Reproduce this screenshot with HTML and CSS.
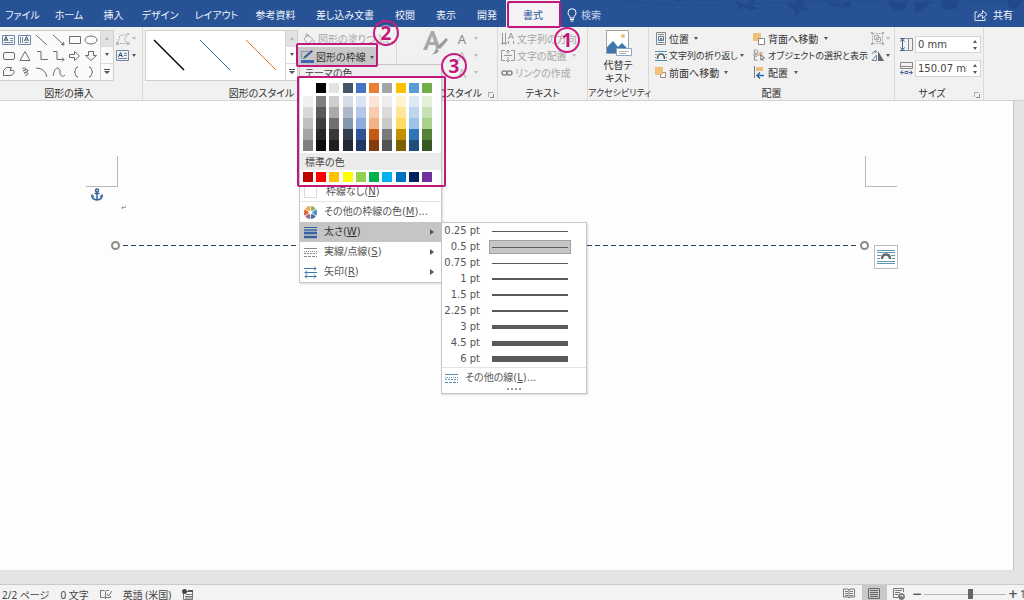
FILE: index.html
```html
<!DOCTYPE html>
<html lang="ja">
<head>
<meta charset="utf-8">
<title>文書 - 書式</title>
<link rel="stylesheet" href="styles.css">
</head>
<body>
<div class="app">
  <header class="titlebar">
    <svg class="leaves" width="404" height="28" viewBox="0 0 404 28" aria-hidden="true">
      <path d="M54 0q2 3 8 0M112 0l14 5 6-5h3l-3 6 8 2-8 2-8-3-9 3 5-5zM166 4l12-4h8l-4 6 8 4-10 1-4 6-2-7zM206 0q14 8 24 0l2 6q-10 4-14 0-8 2-12-6M268 0q10 4 20 0 0 8-8 12-10-2-12-12M296 2q10 0 14-2-2 10-16 12zM322 0h16q2 8-8 10-10 0-8-10zM288 12q8 2 18-4-4 6-18 4M386 0h16q-2 8-10 10-4-4-6-10"/>
      <path class="twig" d="M0 0q60 8 130 4t130-2 144-2M210 0q10 6 24 9M334 2q4 8 2 12"/>
    </svg>
    <nav class="tabs">
      <button>ファイル</button><button>ホーム</button><button>挿入</button><button>デザイン</button><button>レイアウト</button><button>参考資料</button><button>差し込み文書</button><button>校閲</button><button>表示</button><button>開発</button><button class="active">書式</button>
    </nav>
    <button class="tell"><svg width="10" height="14" viewBox="0 0 10 14"><path d="M3 10V8.500Q1 7 1 4.700a4 4 0 0 1 8 0Q9 7 7 8.500V10zM3 11.500h4M3.500 13h3" fill="none" stroke="#fff"/></svg>検索</button>
    <button class="share"><svg width="14" height="12" viewBox="0 0 14 12"><path d="M3.500 3H1v8.500h10V9M3.500 8.500Q4 4.500 8.500 4.500V1.500l4.500 4-4.500 4v-3Q5 6.500 3.500 8.500z" fill="none" stroke="#dfe8f7"/></svg>共有</button>
  </header>

  <div class="ribbon">
    <section class="group g-insert">
      <div class="body">
        <div class="gallery">
          <svg class="shapes" width="100" height="49" viewBox="0 0 100 49" fill="none" stroke="#6b6b6b">
            <g stroke="#6f86a5"><path d="M2.500 4.500h12v9h-12zM10 7.500h3M10 9.500h3M4 11.500h9M18.500 4.500h12v9h-12zM20.500 6v6M22.500 6v6M24.500 11.500h4"/><path d="M4 10l2-4.500 2 4.500M5 9h2M24.500 10l2-4.500 2 4.500M25.500 9h2" stroke="#2b4a78"/></g>
            <path d="M36 4l11 10M53 4l11 10m-3-.5 3 .5-.5-3M69.500 5.500h11v7h-11z"/><ellipse cx="91" cy="9" rx="6" ry="4"/>
            <rect x="3.500" y="21.500" width="11" height="7" rx="1.500"/><path d="M25 20.500l5 9H20zM37 20.500h4v8h7M53 20.500h4v8h7m-2-2 2 2-2 2M69.500 23.500h5v-3l5 4.500-5 4.500v-3h-5zM88.500 20.500h5v4h3L91 29.500 85.500 24.500h3z"/>
            <path d="M3.500 44.500v-5l3-3h5l-1.500 3q5-1 4 2t-4 3zM22 38q3-3 4 0l-3 2q5-3 5 0l-4 2q6-1 3 2l-2 1M36 37q9 0 11 9M53 45q2-9 5-8t2 6q2 4 5 1M78 36q-2.500 0-2.500 2.500T74 41q1.500 0 1.500 2.500T78 46M89 36q2.500 0 2.500 2.500T93 41q-1.500 0-1.500 2.500T89 46"/>
          </svg>
          <span class="scroller"><button class="off" aria-label="上へ"><i class="up"></i></button><button aria-label="下へ"><i class="down"></i></button><button aria-label="その他"><i class="more"></i></button></span>
        </div>
        <div class="stack small">
          <button class="dim" aria-label="図形の編集"><svg width="14" height="12" viewBox="0 0 14 12" fill="none" stroke="#aaa"><path d="M1.500 10.500L4 2.500l8-1-3.500 5 3 4z" stroke-dasharray="2 1"/><path d="M0 9h3v3H0zM10.500 9h3v3h-3zM11 0h2v2h-2z" fill="#bbb" stroke="none"/></svg><b class="car"></b></button>
          <button aria-label="テキスト ボックス"><svg width="14" height="12" viewBox="0 0 14 12" fill="none" stroke="#6f86a5"><path d="M.5.5h12v10H.5zM8 3.500h3M8 5.500h3M2 8.500h9"/><path d="M2.500 7l2-4.500 2 4.500M3 5.500h3" stroke="#2b4a78"/></svg><b class="car"></b></button>
        </div>
      </div>
      <h2>図形の挿入</h2>
    </section>

    <section class="group g-style">
      <div class="body">
        <div class="gallery styles">
          <svg class="lines" width="139" height="48" viewBox="0 0 139 48"><path d="M8 9l30 30" stroke="#000" stroke-width="1.500"/><path d="M54 9l30 30" stroke="#2e6a9e"/><path d="M100 9l30 30" stroke="#d9722c"/></svg>
          <span class="scroller"><button class="off" aria-label="上へ"><i class="up"></i></button><button aria-label="下へ"><i class="down"></i></button><button aria-label="その他"><i class="more"></i></button></span>
        </div>
        <div class="stack">
          <button class="dim"><svg width="14" height="12" viewBox="0 0 14 12" fill="none" stroke="#a5a5a5"><path d="M2 6l4-4 5 4.500-5 4.500zM6 4V1.500q-1.500-2-2 0V4M12 7v3"/></svg>図形の塗りつぶし</button>
          <button class="outline-btn"><svg width="15" height="14" viewBox="0 0 15 14"><path d="M1.500 8.500V1.500h8" fill="none" stroke="#8b9bb3"/><path d="M3 9l1-2.500L11.500 0 13 1.500 5.500 8z" fill="#3c5f96"/><path d="M1 10h13v3H1z" fill="#3f66b5"/></svg>図形の枠線<b class="car"></b></button>
        </div>
      </div>
      <h2>図形のスタイル</h2>
    </section>

    <section class="group g-art">
      <div class="body">
        <button class="quick dim" aria-label="クイック スタイル"><svg width="26" height="26" viewBox="0 0 26 26"><path d="M1 20L9 1h3l6 16-3 3-2-5H7l-2 5zM8 12h4L10 6z" fill="#a9a9a9" fill-rule="evenodd"/><path d="M24 8l2 2-8 9-3-2zM14 18l3 3q-3 4-7 3 3-1 4-6z" fill="#999"/></svg></button>
        <div class="stack letters">
          <button class="dim"><span class="fill">A</span><b class="car"></b></button><button class="dim"><span class="hollow">A</span><b class="car"></b></button><button class="dim"><span class="hollow">A</span><b class="car"></b></button>
        </div>
      </div>
      <h2>ワードアートのスタイル</h2><i class="launch"></i>
    </section>

    <section class="group g-text">
      <div class="body stack">
        <button class="dim"><svg width="14" height="14" viewBox="0 0 14 14" fill="none" stroke="#999"><path d="M1.500 1v11M4.500 1v11M0 10.500l1.500 2 1.500-2M3 10.500l1.500 2 1.500-2M7.500 7l2.500-6 2.500 6M8.500 5h3M7.500 12V9M12.500 9v3"/></svg>文字列の方向</button>
        <button class="dim"><svg width="14" height="14" viewBox="0 0 14 14" fill="none" stroke="#999"><path d="M4 1.500H.5v10H4M10 1.500h3.500v10H10M3 6.500h8M7 1v4M7 8v5M5 3l2-2 2 2M5 11l2 2 2-2"/></svg>文字の配置<b class="car"></b></button>
        <button class="dim"><svg width="12" height="10" viewBox="0 0 12 10" fill="none" stroke="#888" stroke-width="1.500"><rect x="1" y="3" width="5" height="4" rx="2"/><rect x="6" y="3" width="5" height="4" rx="2"/></svg>リンクの作成</button>
      </div>
      <h2>テキスト</h2>
    </section>

    <section class="group g-alt">
      <div class="body">
        <button class="big"><svg width="27" height="27" viewBox="0 0 27 27"><path d="M1.500.5h22v23h-22z" fill="#fff" stroke="#a0a0a0"/><circle cx="18" cy="6" r="2" fill="#eebf79"/><path d="M2 23v-6l6-6 5 6 4-4 6 6v4z" fill="#3d76ad"/><path d="M11.500 18.500h15v7h-15z" fill="#fff" stroke="#8aa7c4"/><path d="M14 21.500h10M14 23.500h7" stroke="#b5b5b5"/></svg><span>代替テ<br>キスト</span></button>
      </div>
      <h2 class="compact">アクセシビリティ</h2>
    </section>

    <section class="group g-arrange">
      <div class="body">
        <div class="stack">
          <button><svg width="12" height="13" viewBox="0 0 12 13" fill="none" stroke="#888"><path d="M1.500.5h9v12h-9zM3 2.500h6M3 10.500h6" /><path d="M3.500 8.500v-4h5v4z" stroke="#4d7eb0"/><path d="M5 8l1-2 1.500 2" stroke="#555"/></svg>位置<b class="car"></b></button>
          <button class="compact"><svg width="12" height="12" viewBox="0 0 12 12" fill="none" stroke="#4c93bd"><path d="M0 1.500h12M0 10.500h12M0 4.500h2M10 4.500h2M0 7.500h1M11 7.500h1"/><path d="M2.500 9q0-5 3.500-5t3.500 5" stroke="#555" stroke-width="1.500"/></svg>文字列の折り返し<b class="car"></b></button>
          <button><svg width="12" height="12" viewBox="0 0 12 12"><path d="M5.500 5.500h5v5h-5z" fill="#fff" stroke="#888"/><path d="M0 0h8v8H0z" fill="#efc07c"/></svg>前面へ移動<b class="car"></b></button>
        </div>
        <div class="stack mid">
          <button><svg width="12" height="12" viewBox="0 0 12 12"><path d="M0 0h8v8H0z" fill="#efc07c"/><path d="M5.500 5.500h6v6h-6z" fill="#fff" stroke="#888"/></svg>背面へ移動<b class="car"></b></button>
          <button class="compact"><svg width="12" height="13" viewBox="0 0 13 13" fill="none" stroke="#888"><path d="M4 .5H1.500v4H5M4 7.500H1.500v4H5M0 6h6M5 1v3M7 3.500h3"/><path d="M6 4h4v3H6z" fill="#efc07c" stroke="none"/><path d="M8.500 5.500v6l1.500-1.500 1 2.500M8.500 5.500l4 4h-2" stroke="#666"/></svg>オブジェクトの選択と表示</button>
          <button><svg width="12" height="13" viewBox="0 0 12 13"><path d="M1.500 0v12" stroke="#777"/><path d="M3 1h7v4H3z" fill="#efc07c"/><path d="M4 9.500h7M7 6.500l-3 3 3 3" fill="none" stroke="#2d65a9" stroke-width="1.500"/></svg>配置<b class="car"></b></button>
        </div>
        <div class="stack small">
          <button class="dim" aria-label="グループ化"><svg width="13" height="13" viewBox="0 0 13 13" fill="none" stroke="#aaa"><path d="M1.500 1.500h10v10h-10z" stroke-dasharray="2 1"/><path d="M3.500 3.500h4v4h-4zM5.500 5.500h4v4h-4z"/><path d="M0 0h2v2H0zM11 0h2v2h-2zM0 11h2v2H0zM11 11h2v2h-2z" fill="#aaa" stroke="none"/></svg><b class="car"></b></button>
          <button aria-label="回転"><svg width="13" height="12" viewBox="0 0 13 12"><path d="M7 11V1l6 10z" fill="#666"/><path d="M5.500 10.500H1L5.500 5zM1 4q1-3 4-2.500M4 0l1.500 1.500L4 3.500" fill="none" stroke="#6d88a8"/></svg><b class="car"></b></button>
        </div>
      </div>
      <h2>配置</h2>
    </section>

    <section class="group g-size">
      <div class="body sizes">
        <label><svg width="13" height="13" viewBox="0 0 13 13" fill="none" stroke="#888"><path d="M5.500.5h3v12h-3M8.500.5h4v12h-4"/><path d="M2.500 1v11M.5 3.500l2-2.500 2 2.500M.5 9.500l2 2.500 2-2.500M0 .5h5M0 12.500h5" stroke="#44648f"/></svg><input aria-label="高さ" value="0 mm"><span class="spin"><i class="up"></i><i class="down"></i></span></label>
        <label><svg width="13" height="13" viewBox="0 0 13 13" fill="none" stroke="#888"><path d="M.5.5h12v6H.5zM.5 4.500h12"/><path d="M1 10.500h3M9 10.500h3M2.500 8.500l-2 2 2 2M10.500 8.500l2 2-2 2M5 9.500h3v2H5z" stroke="#44648f"/></svg><input aria-label="幅" value="150.07 mm"><span class="spin"><i class="up"></i><i class="down"></i></span></label>
      </div>
      <h2>サイズ</h2><i class="launch"></i>
    </section>
  </div>

  <main class="workspace">
    <div class="page">
      <i class="crop left"></i><i class="crop right"></i>
      <svg class="anchor" width="12" height="13" viewBox="0 0 12 13" fill="none" stroke="#34659a" stroke-width="1.500"><circle cx="6" cy="2.500" r="1.500"/><path d="M6 4v8M3.500 5.500h5M1 7.500q0 4 5 4.500 5-.5 5-4.500"/><path d="M0 9l1-2.500L3 9M9 9l2-2.500L12 9" stroke-width="1"/></svg>
      <span class="return">↵</span>
      <div class="line-shape"><i class="handle"></i><i class="dash"></i><i class="handle"></i></div>
      <button class="layout-options" aria-label="レイアウト オプション"><svg width="18" height="16" viewBox="0 0 18 16" fill="none" stroke="#5c9ab5"><path d="M0 1.500h18M0 3.500h18M0 6.500h4M14 6.500h4M0 9.500h3M15 9.500h3M0 12.500h18M0 14.500h18"/><path d="M5 10q0-4.500 4-4.500t4 4.500" stroke="#666" stroke-width="2.500"/></svg></button>
    </div>
  </main>

  <footer class="status">
    <span>2/2 ページ</span><span>0 文字</span>
    <svg width="12" height="11" viewBox="0 0 12 11" fill="none" stroke="#777"><path d="M5.500 9.500L4.500 8.500h-4v-7h4l1 1v7l1-1h4V7M5.500 2.500l1-1H9M7 5l1.500 2L12 2"/></svg>
    <span>英語 (米国)</span>
    <svg width="12" height="12" viewBox="0 0 12 12"><path d="M1.500 4v6.500h9v-8H5M4 5.500h7M3 7.500h7M3 9h7" fill="none" stroke="#777"/><circle cx="2.500" cy="2.500" r="2.500" fill="#444"/><path d="M6 1h5v2H6z" fill="#555"/></svg>
    <div class="views">
      <button aria-label="閲覧モード"><svg width="12" height="11" viewBox="0 0 12 11" fill="none" stroke="#777"><path d="M6 2L5 1H.5v8H5l1 1 1-1h4.500V1H7L6 2v8M2 3.500h3M2 5.500h3M2 7.500h3M7 3.500h3M7 5.500h3M7 7.500h3"/></svg></button>
      <button class="on" aria-label="印刷レイアウト"><svg width="12" height="11" viewBox="0 0 12 11" fill="none" stroke="#666"><path d="M.5.500h11v10H.5zM2 2.500h8M2 4.500h8M2 6.500h8M2 8.500h8"/></svg></button>
      <button aria-label="Web レイアウト"><svg width="12" height="12" viewBox="0 0 12 12" fill="none" stroke="#777"><path d="M5 9.500H.5v-9h10V4M2 2.500h7M2 4.500h5M2 6.500h3"/><circle cx="8.500" cy="8.500" r="3" fill="#777"/><path d="M7 8l2-1 1 2" stroke="#eee"/></svg></button>
    </div>
    <div class="zoom"><button aria-label="縮小">−</button><input type="range" min="0" max="100" value="57" aria-label="ズーム"><button aria-label="拡大">+</button><span>1</span></div>
  </footer>

  <div class="menu">
    <h3>テーマの色</h3>
    <div class="palette">
      <div class="swatches" data-set="theme"></div>
      <div class="shades"></div>
      <h3>標準の色</h3>
      <div class="swatches" data-set="standard"></div>
    </div>
    <button class="item none"><i class="box"></i><span>枠線なし(<u>N</u>)</span></button>
    <button class="item"><svg width="13" height="13" viewBox="0 0 13 13"><path d="M6.500 6.500V0a6.500 6.500 0 0 1 5.500 3z" fill="#8db36a"/><path d="M6.500 6.500L12 3a6.500 6.500 0 0 1 0 7z" fill="#5b8ecb"/><path d="M6.500 6.500L12 10a6.500 6.500 0 0 1-5.500 3z" fill="#4c6f9e"/><path d="M6.500 6.500V13A6.500 6.500 0 0 1 1 10z" fill="#9a6a8a"/><path d="M6.500 6.500L1 10a6.500 6.500 0 0 1 0-7z" fill="#e06a3e"/><path d="M6.500 6.500L1 3a6.500 6.500 0 0 1 5.500-3z" fill="#efae4b"/><circle cx="6.500" cy="6.500" r="2" fill="#fff"/><path d="M6.500 0v13M1 3l11 7M1 10l11-7" stroke="#fff" stroke-width=".7"/></svg><span>その他の枠線の色(<u>M</u>)...</span></button>
    <button class="item selected"><svg width="13" height="13" viewBox="0 0 13 13"><path d="M0 1.500h13" stroke="#3563a0"/><path d="M0 4h13" stroke="#3563a0" stroke-width="1.500"/><path d="M0 7h13M0 11h13" stroke="#3563a0" stroke-width="2.500"/></svg><span>太さ(<u>W</u>)</span><b class="sub"></b></button>
    <button class="item"><svg width="13" height="9" viewBox="0 0 13 9" stroke="#888"><path d="M0 .5h13"/><path d="M0 3.500h13" stroke-dasharray="1 1"/><path d="M0 5.500h13" stroke-dasharray="2 1"/><path d="M0 8.500h13" stroke-dasharray="3 1"/></svg><span>実線/点線(<u>S</u>)</span><b class="sub"></b></button>
    <button class="item"><svg width="13" height="13" viewBox="0 0 13 13" fill="none" stroke="#3f78ae"><path d="M0 2.500h12M10 .5l2 2-2 2M1 6.500h12M3 4.500l-2 2 2 2M1 10.500h11M3 8.500l-2 2 2 2M10 8.500l2 2-2 2"/></svg><span>矢印(<u>R</u>)</span><b class="sub"></b></button>
  </div>

  <div class="submenu">
    <button class="w1"><span>0.25 pt</span><i></i></button>
    <button class="w1 current"><span>0.5 pt</span><i></i></button>
    <button class="w1"><span>0.75 pt</span><i></i></button>
    <button class="w2"><span>1 pt</span><i></i></button>
    <button class="w2"><span>1.5 pt</span><i></i></button>
    <button class="w3"><span>2.25 pt</span><i></i></button>
    <button class="w4"><span>3 pt</span><i></i></button>
    <button class="w5"><span>4.5 pt</span><i></i></button>
    <button class="w6"><span>6 pt</span><i></i></button>
    <button class="others"><svg width="13" height="9" viewBox="0 0 13 9" stroke="#5b8fab"><path d="M0 .5h13"/><path d="M0 3.500h13" stroke-dasharray="1 1"/><path d="M0 5.500h13" stroke-dasharray="2 1"/><path d="M0 8.500h13" stroke-dasharray="3 1"/></svg><em>その他の線(<u>L</u>)...</em></button>
    <div class="grip"></div>
  </div>

  <i class="mark m1"></i><i class="mark m2"></i><i class="mark m3"></i>
  <span class="num n1">1</span><span class="num n2">2</span><span class="num n3">3</span>
</div>
<script src="palette.js"></script>
</body>
</html>
```
FILE: styles.css
```css
* { box-sizing: border-box; }
body {
  margin: 0;
  font: 10px/14px "Noto Sans CJK JP", sans-serif;
  font-feature-settings: "palt";
  color: #333;
}
button, input { font: inherit; color: inherit; font-feature-settings: inherit; }
button { border: 0; padding: 0; background: none; white-space: nowrap; }
h2, h3 { margin: 0; font-size: 10px; font-weight: 400; white-space: nowrap; }
svg { flex: none; display: block; }
.compact { font-size: 9px; }
.app { position: relative; display: flex; flex-direction: column; height: 100vh; overflow: hidden; }

.titlebar { position: relative; display: flex; align-items: stretch; height: 27px; flex: none; background: #275296; color: #f1f5fb; }
.leaves { position: absolute; right: 0; top: 0; fill: #214888; }
.leaves .twig { fill: none; stroke: #244d8f; }
.tabs { display: grid; grid-template-columns: 45px 48px 41px 52px 61px 57px 82px 38px 44px 38px 54px; }
.tabs button { padding-top: 2px; }
.tabs .active { background: #f4f2f5; color: #2b5797; }
.tell, .share { display: flex; align-items: center; gap: 4px; padding-top: 2px; }
.tell { margin-left: 7px; color: #c9d7ee; }
.share { margin-left: auto; margin-right: 11px; gap: 5px; position: relative; }

.ribbon { display: flex; flex: none; height: 74px; background: #f1f1f1; border-bottom: 1px solid #d2d2d2; }
.group { position: relative; display: flex; flex-direction: column; flex: none; border-right: 1px solid #d9d9d9; }
.group h2 { text-align: center; height: 14px; }
.body { display: flex; height: 59px; padding-top: 3px; }
.g-insert { width: 143px; }
.g-style { width: 254px; }
.g-art { width: 101px; }
.g-text { width: 90px; }
.g-alt { width: 61px; }
.g-arrange { width: 246px; }
.g-size { width: 89px; }
.g-style h2 { padding-right: 16px; }
.g-art h2 { display: flex; justify-content: flex-end; padding-right: 15px; }
.g-size h2 { padding-right: 14px; }
.g-insert h2 { padding-right: 4px; }

.gallery { display: flex; height: 51px; border: 1px solid #cfcfcf; background: #fafafa; }
.g-insert .gallery { border-left: 0; }
.styles { margin-left: 2px; background: #fff; }
.scroller { display: grid; grid-template-rows: repeat(3, 1fr); width: 12px; border-left: 1px solid #d4d4d4; }
.g-insert .scroller { width: 13px; }
.scroller button { display: grid; place-content: center; border-bottom: 1px solid #dcdcdc; }
.scroller button:last-child { border-bottom: 0; }
.scroller .off { background: #e2e2e2; }
.up, .down { display: block; width: 0; height: 0; border: solid transparent; }
.up { border-width: 0 2px 3px; border-bottom-color: #555; }
.down { border-width: 3px 2px 0; border-top-color: #555; }
.off .up { border-bottom-color: #b5b5b5; }
.more { display: block; width: 6px; border-top: 1px solid #555; }
.more::after { content: ""; display: block; margin-top: 1px; border: solid transparent; border-width: 3px 3px 0; border-top-color: #555; width: 0; }
.stack { display: flex; flex-direction: column; align-items: flex-start; }
.stack button { display: flex; align-items: center; gap: 2px; height: 17px; }
.g-style .stack { padding-left: 4px; }
.small { padding-left: 2px; }
.car { border: solid transparent; border-width: 3px 2px 0; border-top-color: #555; margin-left: 3px; }
.stack .compact .car, .small .car { margin-left: 0; }
.dim { color: #a6a6a6; }
.dim .car { border-top-color: #bbb; }
.quick { margin-left: 25px; height: 26px; }
.letters { padding-left: 9px; }
.letters button { gap: 4px; }
.letters span { font: 13px/16px "Noto Sans", sans-serif; width: 10px; }
.letters .fill { color: #888; }
.letters .hollow { color: #b9b9b9; }
.g-text .body { padding-left: 3px; }
.big { display: flex; flex-direction: column; align-items: center; gap: 1px; width: 60px; height: 55px; line-height: 13px; }
.g-arrange .body { padding-left: 6px; }
.g-arrange .stack:first-child { width: 98px; }
.mid { width: 116px; }
.g-arrange .mid button { gap: 3px; }
.sizes { flex-direction: column; gap: 7px; padding: 9px 2px 0 5px; }
.sizes label { display: flex; align-items: center; gap: 2px; height: 17px; position: relative; }
.sizes input { flex: 1; min-width: 0; height: 17px; border: 1px solid #d3d3d3; background: #fff; padding: 0 13px 0 2px; font: 10px/15px "DejaVu Sans", sans-serif; color: #444; }
.spin { position: absolute; right: 4px; top: 4px; display: grid; gap: 4px; }
.launch { position: absolute; right: 4px; bottom: 3px; width: 5px; height: 5px; border: solid #aaa; border-width: 1px 0 0 1px; }
.launch::after { content: ""; position: absolute; right: -1px; bottom: -1px; width: 3px; height: 3px; border: solid #888; border-width: 0 1px 1px 0; }

.workspace { flex: 1; display: flex; padding: 0 10px 14px 0; background: #e4e4e4; border-bottom: 1px solid #cacaca; }
.page { position: relative; flex: 1; background: #fdfdfd; border-right: 1px solid #c4c4c4; }
.crop { position: absolute; top: 55px; width: 32px; height: 31px; border-bottom: 1px solid #b9b9b9; }
.crop.left { left: 86px; border-right: 1px solid #b9b9b9; }
.crop.right { left: 865px; border-left: 1px solid #b9b9b9; }
.anchor { position: absolute; left: 91px; top: 87px; }
.return { position: absolute; left: 121px; top: 100px; font: 7px/14px "DejaVu Sans", sans-serif; color: #777; }
.line-shape { position: absolute; left: 111px; top: 140px; width: 758px; display: flex; align-items: center; gap: 3px; }
.dash { flex: 1; height: 1px; background: repeating-linear-gradient(90deg, #24496f 0 5px, transparent 5px 8px); }
.handle { width: 9px; height: 9px; border: 2px solid #8a8a8a; border-radius: 50%; background: #fff; }
.layout-options { position: absolute; left: 874px; top: 144px; width: 24px; height: 24px; display: grid; place-items: center; border: 1px solid #bcbcbc; background: #fff; }

.status { display: flex; align-items: center; gap: 11px; height: 15px; flex: none; padding: 4px 0 0 2px; background: #f3f3f3; color: #444; white-space: nowrap; font-family: "Noto Sans", "Noto Sans CJK JP", sans-serif; }
.item, .others { font-family: "DejaVu Sans", "Noto Sans CJK JP", sans-serif; }
.views { display: flex; margin: -4px 0 0 auto; }
.views button { width: 25px; height: 15px; padding: 2px 0 0; display: grid; place-items: center; }
.views .on { background: #c9c9c9; }
.zoom { display: flex; align-items: center; gap: 2px; margin: -1px 0 0 -11px; }
.zoom button { font: 700 12px/12px "DejaVu Sans", sans-serif; color: #555; }
.zoom input { appearance: none; width: 82px; height: 12px; margin: 0; background: linear-gradient(#b5b5b5, #b5b5b5) center / 100% 1px no-repeat; }
.zoom input::-webkit-slider-thumb { appearance: none; width: 5px; height: 10px; background: #666; }
.zoom span { width: 4px; overflow: hidden; }

.menu { position: absolute; left: 299px; top: 64px; width: 143px; border: 1px solid #c6c6c6; background: #fff; box-shadow: 1px 1px 2px #0002; }
.menu h3 { height: 17px; padding: 1px 0 0 5px; background: #ececec; line-height: 16px; color: #444; }
.menu > h3 { height: 13px; padding-top: 0; background: #eee; }
.palette { display: flex; flex-direction: column; padding-top: 5px; background: #fff; height: 109px; }
.swatches, .shades { display: flex; justify-content: space-between; padding: 0 9px 0 3px; }
.swatches button { width: 10px; height: 10px; }
.shades { margin: 3px 0 2px; }
.shades div { display: grid; }
.shades button { width: 10px; height: 11px; }
.palette .swatches:last-child { margin-top: 2px; }
.item { display: flex; align-items: center; gap: 7px; width: 100%; height: 20px; padding: 0 7px 0 4px; color: #555; }
.item .box { width: 13px; height: 12px; border: 1px solid #ddd; margin-right: 2px; }
.item.none { height: 15px; padding-bottom: 4px; border-bottom: 1px solid #e4e4e4; padding-top: 0; }
.selected { background: #c5c5c5; color: #333; }
.sub { margin-left: auto; border: solid transparent; border-width: 3px 0 3px 4px; border-left-color: #555; }

.submenu { position: absolute; left: 441px; top: 222px; width: 146px; height: 172px; border: 1px solid #c6c6c6; background: #fff; box-shadow: 1px 1px 2px #0002; }
.submenu button { display: flex; align-items: center; width: 100%; height: 16px; color: #555; }
.submenu span { width: 38px; text-align: right; font: 10px/16px "DejaVu Sans", sans-serif; }
.submenu i { width: 76px; margin-left: 12px; background: #5a5a5a; }
.submenu em { font-style: normal; }
.submenu .current { background: linear-gradient(#c6c6c6, #c6c6c6) 48px 2px / 80px 12px no-repeat, linear-gradient(#a2a2a2, #a2a2a2) 47px 1px / 82px 14px no-repeat; }
.w1 i { height: 1px; }
.w2 i, .w3 i { height: 2px; }
.w4 i { height: 4px; }
.w5 i { height: 5px; }
.w6 i { height: 6px; }
.submenu .others { height: 21px; gap: 7px; padding-left: 3px; border-top: 1px solid #e4e4e4; }
.grip { width: 14px; height: 2px; margin: 0 auto; background: repeating-linear-gradient(90deg, #999 0 2px, transparent 2px 4px); }

.mark { position: absolute; border: 2px solid #c0187c; border-radius: 2px; pointer-events: none; }
.m1 { left: 507px; top: 1px; width: 54px; height: 27px; }
.m2 { left: 296px; top: 43px; width: 82px; height: 24px; }
.m3 { left: 297px; top: 76px; width: 149px; height: 111px; }
.outline-btn { background: #c8c8c8; }
.g-style .stack .outline-btn { height: 20px; margin-left: -4px; padding: 0 3px 0 2px; gap: 1px; }
.num { position: absolute; width: 26px; height: 26px; border: 2px solid #c81a80; border-radius: 50%; font: 700 19px/22px "Open Sans", sans-serif; text-align: center; color: #c0187c; text-shadow: 0 0 2px #fff, 0 0 2px #fff; }
.n1 { left: 554px; top: 27px; }
.n2 { left: 373px; top: 20px; }
.n3 { left: 441px; top: 53px; }
```
FILE: palette.js
```js
const theme = ['#ffffff', '#000000', '#e4e2e2', '#44546a', '#4472c4', '#ed7d31', '#a5a5a5', '#ffc000', '#5b9bd5', '#70ad47'];
const shades = [
  ['#f0f0f0', '#d8d8d8', '#bfbfbf', '#a5a5a5', '#7f7f7f'],
  ['#7f7f7f', '#595959', '#3f3f3f', '#262626', '#0d0d0d'],
  ['#cfcdcd', '#aea9a9', '#757070', '#3a3838', '#211f1f'],
  ['#d6dce5', '#adb9ca', '#8497b0', '#333f50', '#222a35'],
  ['#dae3f3', '#b4c7e7', '#8faadc', '#2f5597', '#203864'],
  ['#fbe5d6', '#f8cbad', '#f4b183', '#c55a11', '#843c0c'],
  ['#ededed', '#dbdbdb', '#c9c9c9', '#7b7b7b', '#525252'],
  ['#fff2cc', '#ffe699', '#ffd966', '#bf9000', '#7f6000'],
  ['#deebf7', '#bdd7ee', '#9dc3e6', '#2e75b6', '#1f4e79'],
  ['#e2f0d9', '#c5e0b4', '#a9d18e', '#548235', '#385723']
];
const standard = ['#c00000', '#ff0000', '#ffc000', '#ffff00', '#92d050', '#00b050', '#00b0f0', '#0070c0', '#002060', '#7030a0'];

function swatch(color) {
  const button = document.createElement('button');
  button.style.background = color;
  button.setAttribute('aria-label', color);
  return button;
}
document.querySelector('[data-set=theme]').append(...theme.map(swatch));
document.querySelector('[data-set=standard]').append(...standard.map(swatch));
document.querySelector('.shades').append(...shades.map(list => {
  const column = document.createElement('div');
  column.append(...list.map(swatch));
  return column;
}));
```
